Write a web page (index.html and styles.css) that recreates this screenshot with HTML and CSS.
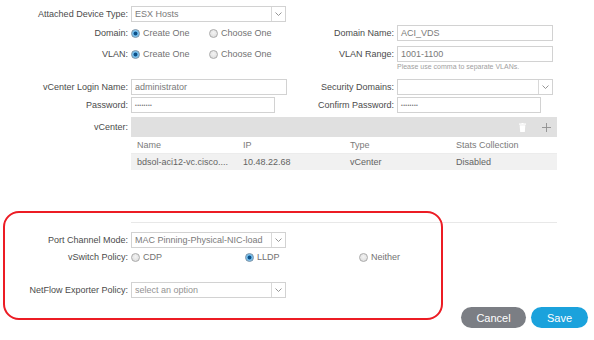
FILE: index.html
```html
<!DOCTYPE html>
<html>
<head>
<meta charset="utf-8">
<link rel="stylesheet" href="styles.css">
</head>
<body>
<div class="page">
  <div class="row r1">
    <div class="lbl">Attached Device Type:</div>
    <div class="ctl">
      <div class="select w155"><span class="val">ESX Hosts</span><span class="arrow"><svg width="7" height="4" viewBox="0 0 7 4"><polyline points="0.5,0.5 3.5,3.5 6.5,0.5" fill="none" stroke="#8a8a8a" stroke-width="0.9"/></svg></span></div>
    </div>
  </div>

  <div class="row r2">
    <div class="lbl">Domain:</div>
    <div class="ctl radios">
      <label class="opt w78"><span class="radio on"></span>Create One</label>
      <label class="opt"><span class="radio"></span>Choose One</label>
    </div>
    <div class="lbl">Domain Name:</div>
    <div class="ctl"><div class="input w156">ACI_VDS</div></div>
  </div>

  <div class="row r3">
    <div class="lbl">VLAN:</div>
    <div class="ctl radios">
      <label class="opt w78"><span class="radio on"></span>Create One</label>
      <label class="opt"><span class="radio"></span>Choose One</label>
    </div>
    <div class="lbl">VLAN Range:</div>
    <div class="ctl"><div class="input w156">1001-1100</div></div>
  </div>

  <div class="row help-row">
    <div></div><div></div><div></div>
    <div class="help">Please use comma to separate VLANs.</div>
  </div>

  <div class="row r4">
    <div class="lbl">vCenter Login Name:</div>
    <div class="ctl"><div class="input w156">administrator</div></div>
    <div class="lbl">Security Domains:</div>
    <div class="ctl">
      <div class="select w156"><span class="val"></span><span class="arrow"><svg width="7" height="4" viewBox="0 0 7 4"><polyline points="0.5,0.5 3.5,3.5 6.5,0.5" fill="none" stroke="#8a8a8a" stroke-width="0.9"/></svg></span></div>
    </div>
  </div>

  <div class="row r5">
    <div class="lbl">Password:</div>
    <div class="ctl"><div class="input w144 dots">••••••••</div></div>
    <div class="lbl">Confirm Password:</div>
    <div class="ctl"><div class="input w144 dots">••••••••</div></div>
  </div>

  <div class="row r6">
    <div class="lbl vlbl">vCenter:</div>
    <div class="table">
      <div class="tbar">
        <svg class="trash" width="7" height="9" viewBox="0 0 7 9"><rect x="0" y="0.5" width="7" height="1.2" fill="#ffffff"/><rect x="2.5" y="0" width="2" height="1" fill="#ffffff"/><path d="M0.7 2.3 H6.3 L5.8 9 H1.2 Z" fill="#ffffff"/></svg>
        <svg class="plus" width="9" height="9" viewBox="0 0 9 9"><path d="M4.5 0 V9 M0 4.5 H9" stroke="#8e8e8e" stroke-width="0.9"/></svg>
      </div>
      <div class="trow thead">
        <span class="c1">Name</span><span class="c2">IP</span><span class="c3">Type</span><span class="c4">Stats Collection</span>
      </div>
      <div class="trow tdata">
        <span class="c1">bdsol-aci12-vc.cisco....</span><span class="c2">10.48.22.68</span><span class="c3">vCenter</span><span class="c4">Disabled</span>
      </div>
    </div>
  </div>

  <div class="sep"></div>

  <div class="brow b1">
    <div class="lbl">Port Channel Mode:</div>
    <div class="ctl">
      <div class="select w155"><span class="val">MAC Pinning-Physical-NIC-load</span><span class="arrow"><svg width="7" height="4" viewBox="0 0 7 4"><polyline points="0.5,0.5 3.5,3.5 6.5,0.5" fill="none" stroke="#8a8a8a" stroke-width="0.9"/></svg></span></div>
    </div>
  </div>

  <div class="brow b2">
    <div class="lbl">vSwitch Policy:</div>
    <div class="ctl triple">
      <label class="opt"><span class="radio"></span>CDP</label>
      <label class="opt"><span class="radio on"></span>LLDP</label>
      <label class="opt"><span class="radio"></span>Neither</label>
    </div>
  </div>

  <div class="brow b3">
    <div class="lbl">NetFlow Exporter Policy:</div>
    <div class="ctl">
      <div class="select w155"><span class="val ph">select an option</span><span class="arrow"><svg width="7" height="4" viewBox="0 0 7 4"><polyline points="0.5,0.5 3.5,3.5 6.5,0.5" fill="none" stroke="#8a8a8a" stroke-width="0.9"/></svg></span></div>
    </div>
  </div>

  <div class="actions">
    <button class="btn cancel">Cancel</button>
    <button class="btn save">Save</button>
  </div>

  <div class="highlight"></div>
</div>
</body>
</html>
```

FILE: styles.css
```css
html, body {
  margin: 0;
  padding: 0;
  background: #ffffff;
}
body {
  font-family: "Liberation Sans", Arial, sans-serif;
  font-size: 9px;
  color: #4a4a4a;
  width: 594px;
  height: 340px;
  overflow: hidden;
}
.page {
  position: relative;
  width: 594px;
  height: 340px;
}
.row {
  display: grid;
  grid-template-columns: 131px 166px 100px 160px;
  height: 16px;
  align-items: center;
}
.r1 { margin-top: 6px; }
.r2 { margin-top: 3px; }
.r3 { margin-top: 5px; }
.help-row { height: 10px; }
.r4 { margin-top: 7px; }
.r5 { margin-top: 2px; }
.r6 { margin-top: 4px; height: auto; align-items: start; }

.lbl {
  text-align: right;
  padding-right: 3px;
  white-space: nowrap;
  color: #4b4b4b;
  line-height: 16px;
}
.vlbl { padding-top: 2px; }
.ctl {
  display: flex;
  align-items: center;
  height: 16px;
}
.input, .select {
  box-sizing: border-box;
  height: 16px;
  border: 1px solid #d2d2d2;
  background: #fff;
  color: #7a7a7a;
  line-height: 14px;
  padding-left: 3px;
  white-space: nowrap;
  overflow: hidden;
}
.w155 { width: 155px; }
.w156 { width: 156px; }
.w144 { width: 144px; }
.dots {
  font-size: 5px;
  letter-spacing: 0.4px;
  color: #777;
}
.select {
  display: flex;
  padding-right: 0;
}
.select .val {
  flex: 1;
  overflow: hidden;
}
.select .ph { color: #939393; }
.arrow {
  width: 13px;
  border-left: 1px solid #d8d8d8;
  display: flex;
  align-items: center;
  justify-content: center;
}
.help {
  font-size: 7px;
  color: #a0a0a0;
  line-height: 10px;
  white-space: nowrap;
}
.radios { display: flex; }
.opt {
  display: flex;
  align-items: center;
  color: #727272;
  white-space: nowrap;
}
.w78 { width: 78px; }
.radio {
  box-sizing: border-box;
  width: 9px;
  height: 9px;
  border-radius: 50%;
  border: 1px solid #aaaaaa;
  background: radial-gradient(circle at 50% 40%, #f4f4f4 0, #d9d9d9 100%);
  margin-right: 3px;
  margin-top: 1px;
}
.radio.on {
  border-color: #7590a6;
  background: radial-gradient(circle, #0d4f86 0, #0d4f86 1.6px, #5fb0e4 2.2px, #a5d3f0 4px);
}

.table {
  grid-column: 2 / 5;
  width: 426px;
}
.tbar {
  height: 20px;
  background: #e0e0e0;
  display: flex;
  align-items: center;
  justify-content: flex-end;
  padding-right: 6px;
}
.trash { margin-right: 16px; }
.trow {
  display: grid;
  grid-template-columns: 106px 107px 106px 107px;
  height: 16px;
  line-height: 16px;
  white-space: nowrap;
}
.trow span { padding-left: 6px; overflow: hidden; }
.thead {
  border-bottom: 1px solid #ececec;
  color: #7a7a7a;
}
.tdata {
  background: #f1f1f1;
  color: #636363;
}

.sep {
  margin-top: 52px;
  margin-left: 131px;
  width: 426px;
  height: 1px;
  background: #e8e8e8;
}
.brow {
  display: grid;
  grid-template-columns: 131px 426px;
  height: 16px;
  align-items: center;
}
.b1 { margin-top: 9px; }
.b2 { margin-top: 1px; }
.b3 { margin-top: 17px; }
.triple {
  display: grid;
  grid-template-columns: 114px 114px 114px;
}
.actions {
  display: flex;
  justify-content: flex-end;
  gap: 5px;
  padding-right: 6px;
  margin-top: 9px;
}
.btn {
  height: 21px;
  border: none;
  border-radius: 11px;
  color: #fff;
  font-family: "Liberation Sans", Arial, sans-serif;
  font-size: 11px;
  padding: 0;
}
.cancel { width: 65px; background: #7b7e84; }
.save { width: 57px; background: #1ba2dc; }

.highlight {
  position: absolute;
  left: 3px;
  top: 205px;
  width: 440px;
  height: 109px;
  box-sizing: border-box;
  border: 2px solid #ec1c24;
  border-radius: 16px;
  pointer-events: none;
}
```
